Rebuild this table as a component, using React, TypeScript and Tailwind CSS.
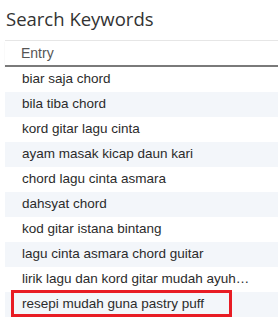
import React from "react";

const entries = [
  "biar saja chord",
  "bila tiba chord",
  "kord gitar lagu cinta",
  "ayam masak kicap daun kari",
  "chord lagu cinta asmara",
  "dahsyat chord",
  "kod gitar istana bintang",
  "lagu cinta asmara chord guitar",
  "lirik lagu dan kord gitar mudah ayuh…",
  "resepi mudah guna pastry puff",
];

export default function App() {
  return (
    <div className="relative w-[278px] h-[317px] overflow-hidden bg-white text-[#333]">
      <h1 className="pl-[6px] pt-[5px] h-[40px] text-[18.5px] leading-[28px] font-['Open_Sans',sans-serif] text-[#333]">
        Search Keywords
      </h1>
      <div className="ml-[5px] border-t border-[#e6e6e6]">
        <div className="h-[26px] flex items-center pl-[16px] border-b-2 border-[#7a7a7a] shadow-[0_1px_1px_rgba(0,0,0,0.12)] text-[14px] text-[#555] font-['Liberation_Sans',Arial,sans-serif]">
          Entry
        </div>
        {entries.map((e, i) => (
          <div
            key={e}
            className={`h-[25px] flex items-center pl-[17px] pr-[20px] text-[13.5px] font-['Liberation_Sans',Arial,sans-serif] text-[#2b2b2b] ${
              i % 2 === 1 ? "bg-[#f3f6fa]" : "bg-white"
            }`}
          >
            <span className="whitespace-nowrap">{e}</span>
          </div>
        ))}
      </div>
      <div className="absolute left-[11px] top-[290px] w-[221px] h-[27px] border-[3px] border-[#e81c24]" />
    </div>
  );
}
